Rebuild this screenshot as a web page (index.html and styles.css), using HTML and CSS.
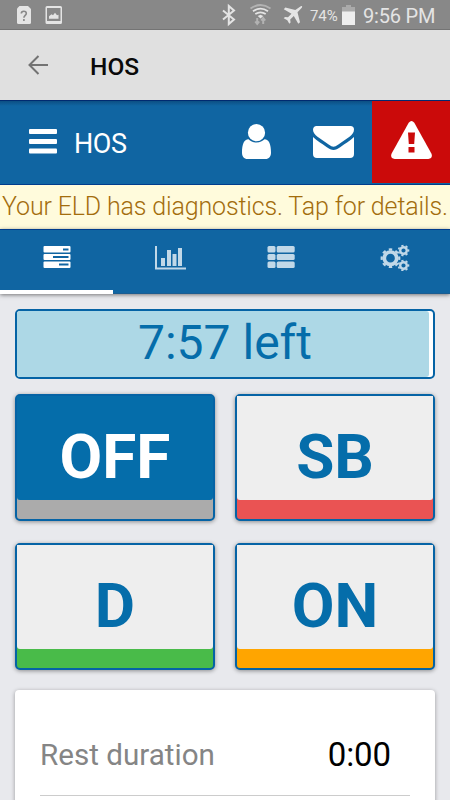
FILE: index.html
```html
<!DOCTYPE html>
<html lang="en">
<head>
<meta charset="utf-8">
<title>HOS</title>
<link rel="stylesheet" href="styles.css">
</head>
<body>
<div class="status">
  <svg class="status-left" width="64" height="30" viewBox="0 0 64 30">
    <path d="M19.5 6H28l3 3v13.500q0 1.500-1.500 1.500h-11Q17 24 17 22.500V8.500Z" fill="#e4e4e4"/>
    <path d="M21.300 13.500q0-2.300 2.500-2.300t2.500 2.200c0 1.900-2.400 2-2.400 4.300M23.900 19v2" fill="none" stroke="#888" stroke-width="1.600"/>
    <path d="M47 6h13.500q1.500 0 1.500 1.500v15q0 1.500-1.500 1.500H47q-1.500 0-1.500-1.500v-15Q45.500 6 47 6Zm0 2v13h13.500V8Z" fill="#e4e4e4" fill-rule="evenodd"/>
    <path d="M49 18.700v-2.500l2.500-2 1.500 1 2-2.500 2 2.500 1.500-.5v4Z" fill="#e4e4e4"/>
  </svg>
  <svg class="status-icons" width="92" height="30" viewBox="218 0 92 30">
    <path d="m223 10.500 11 9-5.200 4.500V6l5.200 4.500-11 9" fill="none" stroke="#e4e4e4" stroke-width="2"/>
    <g fill="none" stroke="#e4e4e4" stroke-width="1.800">
      <path d="M250.500 8.500q10-7 20 0" stroke="#b2b2b2"/>
      <path d="M253 11.300q7.500-5.200 15 0"/>
      <path d="M255.300 14q5.200-3.400 10.400 0"/>
    </g>
    <path d="m257.700 16 2.800-1.300 2.800 1.300-2.800 2.500Z" fill="#e4e4e4"/>
    <path d="M257.200 18v6m-2-2.500 2 2.500 2-2.500M263.200 24v-6m-2 2.500 2-2.500 2 2.500" fill="none" stroke="#b2b2b2" stroke-width="2"/>
    <path d="M300.800 6.300c1.300-.8 1.800.3 1 1.500l-4.300 4.500 2.500 10-1.700 1.400-4.500-7.700-3.600 3.500.4 3-1.300 1.300-2-3.600-3.600-2 1.300-1.300 3 .4 3.500-3.600-7.700-4.500 1.500-1.700 10 2.500Z" fill="#e4e4e4"/>
  </svg>
  <span class="percent">74%</span>
  <svg class="battery" width="13" height="20" viewBox="0 0 13 20">
    <path d="M0 2h4V0h5v2h4v5H0Z" fill="#aaa"/><path d="M0 6.500h13V20H0Z" fill="#eee"/>
  </svg>
  <span class="clock">9:56 PM</span>
</div>
<header class="appbar">
  <svg width="20" height="20" viewBox="0 0 20 20"><path d="M20 10H1.500M10.500 1 1.500 10l9 9" fill="none" stroke="#737373" stroke-width="2"/></svg>
  <h1>HOS</h1>
</header>
<nav class="nav">
  <svg class="menu" width="28" height="25" viewBox="0 0 28 25" fill="#fff"><rect width="28" height="5" rx="1"/><rect y="10" width="28" height="5" rx="1"/><rect y="19.500" width="28" height="5" rx="1"/></svg>
  <span class="nav-title">HOS</span>
  <svg class="user" width="29" height="35" viewBox="0 0 29 35" fill="#fff">
    <path d="M6.500 15.300C2 15.300 0 20.500 0 28.500 0 32.500 2 35 5.500 35h18c3.500 0 5.500-2.500 5.500-6.500 0-8-2-13.200-6.500-13.200-2 1.900-4.500 3.200-8 3.200s-6-1.300-8-3.200Z"/><circle cx="14.500" cy="8.700" r="9.200" fill="#1065a2"/><circle cx="14.500" cy="8.700" r="8.600"/>
  </svg>
  <svg class="mail" width="41" height="32" viewBox="0 0 41 32" fill="#fff">
    <path d="M3.500 0h34Q41 0 41 3.500C41 6.500 39 9 36.500 10.800L25 18.800c-3.500 2.500-5.500 2.500-9 0L4.500 10.800C2 9 0 6.500 0 3.800 0 1.500 1.500 0 3.500 0Z"/>
    <path d="M0 11c4 3.700 9 6.700 13.500 10 5.500 4 8.500 4 14 0 4.500-3.300 9.500-6.300 13.500-10V28q0 4-4 4H4q-4 0-4-4Z"/>
  </svg>
  <div class="alert">
    <svg width="41" height="38" viewBox="0 0 41 38"><path d="M17.700 1.800q2.800-3.600 5.600 0l17.200 31q1.500 4.700-3.200 5.200H3.700Q-1 37.500.5 32.800Z" fill="#fff"/><path d="M17 11.500h7l-.8 11.500h-5.400ZM17.500 26h6v5.500h-6Z" fill="#cb0a0a"/></svg>
  </div>
</nav>
<div class="banner"><span>Your ELD has diagnostics. Tap for details.</span></div>
<div class="tabs">
  <div class="tab active">
    <svg width="28" height="28" viewBox="0 0 28 28"><g fill="#fff"><rect x=".5" y="3" width="27" height="6.500" rx="1"/><rect x=".5" y="11" width="27" height="6" rx="1"/><rect x=".5" y="18.500" width="27" height="6.500" rx="1"/></g><path d="M20 6.500h5.500M10 14h15.500M16 21.500h9.500" stroke="#1065a2" stroke-width="1.800"/></svg>
  </div>
  <div class="tab chart">
    <svg width="32" height="28" viewBox="0 0 32 28" fill="#c1d8e8"><path d="M0 3h2v21.500h29v2H0Z"/><path d="M6 15h4v8H6Zm6-8h4v16h-4Zm5.500 4h4v12h-4Zm5.500-6h4v18h-4Z"/></svg>
  </div>
  <div class="tab">
    <svg width="28" height="28" viewBox="0 0 28 28" fill="#c1d8e8"><rect x=".5" y="3" width="8" height="6.500" rx="1.500"/><rect x="9.700" y="3" width="18" height="6.500" rx="1.500"/><rect x=".5" y="11" width="8" height="6" rx="1.500"/><rect x="9.700" y="11" width="18" height="6" rx="1.500"/><rect x=".5" y="18.500" width="8" height="6.500" rx="1.500"/><rect x="9.700" y="18.500" width="18" height="6.500" rx="1.500"/></svg>
  </div>
  <div class="tab gears">
    <svg width="30" height="28" viewBox="0 0 30 28" fill="none" stroke="#c1d8e8"><circle cx="10.500" cy="15.200" r="6.200" stroke-width="3.700"/><circle cx="10.500" cy="15.200" r="8.800" stroke-width="2.200" pathLength="16" stroke-dasharray="1 1" stroke-dashoffset=".5"/><g id="cog"><circle cx="23.500" cy="7.500" r="3.300" stroke-width="2.400"/><circle cx="23.500" cy="7.500" r="5" stroke-width="1.600" pathLength="14" stroke-dasharray="1 1" stroke-dashoffset=".5"/></g><use href="#cog" y="15"/></svg>
  </div>
</div>
<main>
  <div class="progress"><div class="fill"></div><span>7:57 left</span></div>
  <div class="grid">
    <div class="duty selected"><div class="face"><span>OFF</span></div></div>
    <div class="duty sleeper"><div class="face"><span>SB</span></div></div>
    <div class="duty driving"><div class="face"><span>D</span></div></div>
    <div class="duty on"><div class="face"><span>ON</span></div></div>
  </div>
  <section class="card">
    <div class="row"><span class="label">Rest duration</span><span class="value">0:00</span></div>
  </section>
</main>
</body>
</html>
```
FILE: styles.css
```css
* { box-sizing: border-box; }
body { margin: 0; width: 450px; height: 800px; overflow: hidden; background: #e8e9ed; font-family: Roboto, sans-serif; }
svg { display: block; flex: none; }
span { white-space: nowrap; }
.status { height: 30px; background: #888; border-bottom: 1px solid #747474; display: flex; color: #e4e4e4; }
.status-icons { margin-left: 154px; }
.percent { font-size: 15px; line-height: 32px; width: 32px; letter-spacing: -.1px; }
.battery { margin-top: 5px; }
.clock { font-size: 20px; line-height: 32px; margin-left: 8px; letter-spacing: -.2px; }
.appbar { height: 70px; background: #e0e0e0; display: flex; align-items: center; padding-left: 28px; }
.appbar h1 { margin: 2px 0 0 42px; font-size: 24.5px; font-weight: 500; color: #0a0a0a; }
.nav { height: 85px; background: linear-gradient(#0c4f83, #1065a2 5px); border-top: 1px solid #002a70; border-bottom: 1px solid #003c8c; display: flex; }
.menu { margin: 28px 0 0 29px; }
.nav-title { width: 167px; margin-left: 17px; font-size: 27px; line-height: 86px; letter-spacing: -.4px; color: #fff; }
.user { margin: 22.5px 0 0 1px; }
.mail { margin: 25px 0 0 42px; }
.alert { width: 78px; height: 82px; margin-left: auto; background: #cb0a0a; padding: 20px 0 0 19px; }
.banner { height: 44px; background: #fffbdc; color: #a36d0d; font-size: 25px; font-weight: 300; line-height: 44px; letter-spacing: -.15px; padding-left: 2px; }
.tabs { height: 65px; background: #1065a2; border-top: 1px solid #003c8c; border-bottom: 1px solid #1b5d91; display: grid; grid-template-columns: 113px 112px 112px 113px; box-shadow: 0 1px 4px rgba(0,0,0,.5); }
.tab { display: flex; justify-content: center; padding-top: 13px; }
.chart { padding-left: 4px; }
.gears { padding-left: 2px; }
.active { border-bottom: 4px solid #fff; margin-bottom: -1px; }
main { padding: 15px 15px 0; }
.progress { position: relative; height: 70px; border: 2px solid #0563a5; border-radius: 5px; background: #fff; text-align: center; font-size: 48px; line-height: 64px; color: #056daa; }
.progress span { position: relative; }
.fill { position: absolute; top: 0; left: 0; width: 412px; height: 66px; background: #add8e6; border-radius: 3px; }
.grid { display: grid; grid-template-columns: 1fr 1fr; gap: 22px 20px; margin-top: 15px; }
.duty { height: 127px; border: 2px solid #0563a5; border-radius: 5px; background: #ababab; box-shadow: 0 1px 4px rgba(0,0,0,.4); }
.face { height: 104px; border-radius: 0 0 3px 3px; background: #eee; color: #056daa; font-size: 62px; font-weight: 700; line-height: 121px; text-align: center; }
.selected .face { background: #056daa; color: #fff; }
.sleeper { background: #ea5353; }
.driving { background: #49bb49; }
.on { background: #ffa500; }
.card { height: 130px; margin-top: 20px; padding: 25px; background: #fff; border-radius: 4px; box-shadow: 0 1px 4px rgba(0,0,0,.35); }
.row { height: 81px; border-bottom: 1px solid #ccc; display: flex; justify-content: space-between; padding-right: 19px; }
.label { font-size: 29.6px; line-height: 81px; color: #858585; }
.value { font-size: 33px; line-height: 79px; letter-spacing: -.1px; color: #000; }
```
